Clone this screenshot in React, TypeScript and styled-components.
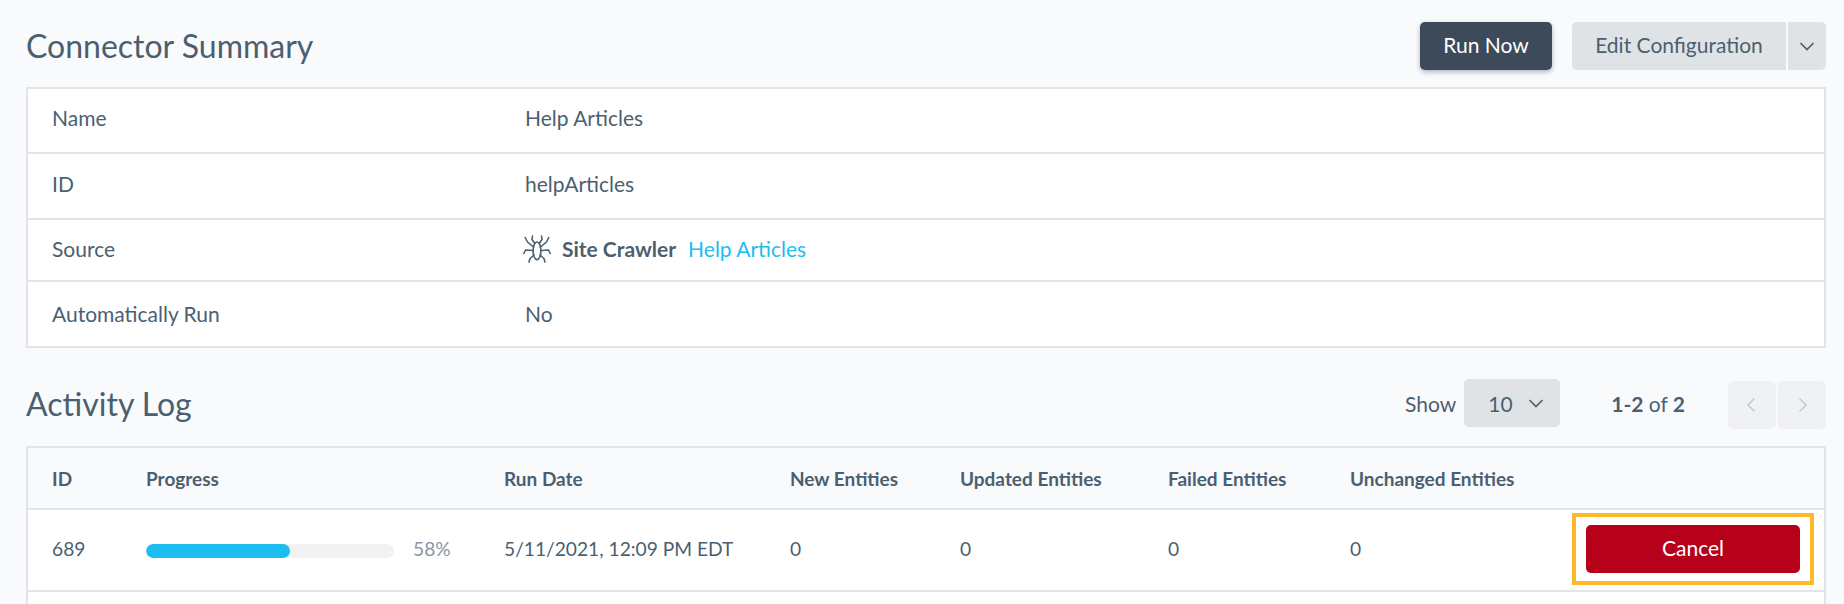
import React from "react";
import styled, { createGlobalStyle } from "styled-components";

const Global = createGlobalStyle`
  html, body { margin: 0; padding: 0; height: 100%; background: #f9fafc; overflow: hidden; }
  * { box-sizing: border-box; }
  body { font-family: Lato, "Open Sans", sans-serif; color: #4b5f70; font-size: 21px; }
`;

const Page = styled.div`
  padding: 22px 18px 0 26px;
  height: 604px;
  overflow: hidden;
`;

const SectionHeader = styled.div<{ $top?: number }>`
  display: flex;
  align-items: center;
  justify-content: space-between;
  height: 48px;
  margin-top: ${(p) => p.$top ?? 0}px;
  margin-bottom: 17px;
`;

const Title = styled.h2<{ $lift?: number }>`
  margin: -${(p) => p.$lift ?? 0}px 0 0;
  font-size: 32px;
  font-weight: 400;
  color: #4b5f70;
  line-height: 48px;
`;

const Actions = styled.div`
  display: flex;
  align-items: center;
`;

const Button = styled.button`
  font-family: inherit;
  font-size: 21px;
  height: 48px;
  border: 0;
  border-radius: 5px;
  padding: 0 0 3px;
  display: inline-flex;
  align-items: center;
  justify-content: center;
`;

const PrimaryButton = styled(Button)`
  width: 132px;
  margin-right: 20px;
  background: #3c4a59;
  color: #fff;
  box-shadow: 0 2px 5px rgba(60, 74, 89, 0.4);
`;

const SecondaryButton = styled(Button)`
  width: 214px;
  background: #e0e3e6;
  color: #4b5f70;
  border-radius: 5px 0 0 5px;
`;

const CaretButton = styled(Button)`
  width: 38px;
  margin-left: 2px;
  padding: 0;
  background: #e0e3e6;
  color: #4b5f70;
  border-radius: 0 5px 5px 0;
`;

const Table = styled.table`
  width: 1800px;
  table-layout: fixed;
  border-collapse: collapse;
  background: #fff;
  border: 2px solid #e1e4e8;
`;

const SummaryRow = styled.tr<{ $h: number }>`
  height: ${(p) => p.$h}px;
  border-bottom: 2px solid #e1e4e8;
`;

const Cell = styled.td<{ $lift: number }>`
  padding: 0 0 ${(p) => p.$lift}px 24px;
  white-space: nowrap;
`;

const ValueCell = styled(Cell)`
  padding-left: 0;
`;

const Source = styled.div`
  display: flex;
  align-items: center;
  margin-left: -2px;
`;

const SourceName = styled.strong`
  font-weight: 700;
  margin: 0 12px 0 11px;
`;

const Link = styled.a`
  color: #1cbdef;
  text-decoration: none;
`;

const LogControls = styled.div`
  display: flex;
  align-items: center;
`;

const ShowLabel = styled.span`
  margin: -4px 8px 0 0;
`;

const Select = styled.div`
  width: 96px;
  height: 48px;
  margin-top: -4px;
  background: #e0e3e6;
  border-radius: 5px;
  display: flex;
  align-items: center;
  justify-content: space-between;
  padding: 0 16px 0 24px;
`;

const Range = styled.span`
  margin: -4px 43px 0 51px;
  strong { font-weight: 700; }
`;

const Pager = styled.div`
  display: flex;
  gap: 2px;
`;

const PageButton = styled.div`
  width: 48px;
  height: 48px;
  background: #eff1f3;
  border-radius: 5px;
  display: flex;
  align-items: center;
  justify-content: center;
  color: #c6ccd2;
`;

const HeadRow = styled.tr`
  height: 62px;
  background: #f9fafc;
  border-bottom: 2px solid #e1e4e8;
`;

const HeadCell = styled.th<{ $w?: number; $pl?: number }>`
  ${(p) => (p.$w ? `width: ${p.$w}px;` : "")}
  padding: 0 0 0 ${(p) => p.$pl ?? 0}px;
  text-align: left;
  font-weight: 700;
  font-size: 19px;
  white-space: nowrap;
`;

const DataRow = styled.tr<{ $h: number }>`
  height: ${(p) => p.$h}px;
  border-bottom: 2px solid #e1e4e8;
`;

const DataCell = styled.td<{ $pl?: number }>`
  padding: 0 0 3px ${(p) => p.$pl ?? 0}px;
  font-size: 19.2px;
  white-space: nowrap;
`;

const Progress = styled.div`
  display: flex;
  align-items: center;
`;

const Track = styled.div`
  width: 248px;
  height: 14px;
  background: #f1f2f4;
  border-radius: 7px;
  overflow: hidden;
  margin-top: 5px;
`;

const Fill = styled.div`
  height: 100%;
  background: #1cbdef;
  border-radius: 7px;
`;

const Percent = styled.span`
  margin-left: 19px;
  color: #8a96a1;
`;

const Highlight = styled.div`
  width: 242px;
  height: 72px;
  margin: 1px 0 0 4px;
  border: 4px solid #fdb927;
  display: flex;
  align-items: center;
  justify-content: center;
`;

const CancelButton = styled(Button)`
  width: 214px;
  background: #b70019;
  color: #fff;
`;

const Chevron = ({ dir = "down" }: { dir?: "down" | "left" | "right" }) => {
  const d = dir === "down" ? "M1.5 5l6.5 6.5L14.5 5" : dir === "left" ? "M10.5 1.5L4 8l6.5 6.5" : "M5.5 1.5L12 8l-6.5 6.5";
  return (
    <svg width={16} height={16} viewBox="0 0 16 16" fill="none" stroke="currentColor" strokeWidth="1.7">
      <path d={d} />
    </svg>
  );
};

const Spider = () => (
  <svg width="28" height="28" viewBox="0 0 28 28" fill="none" stroke="#4b5f70" strokeWidth="1.6" strokeLinecap="round" strokeLinejoin="round">
    <ellipse cx="14" cy="15.8" rx="3.9" ry="8.8" />
    <path d="M11.5 8 L9 4.5 L9.5 1" />
    <path d="M16.5 8 L19 4.5 L18.5 1" />
    <path d="M10.5 12 L4.5 7 L2.2 2.5" />
    <path d="M17.5 12 L23.5 7 L25.8 2.5" />
    <path d="M10 15.5 L2.5 15 L0.8 18.5" />
    <path d="M18 15.5 L25.5 15 L27.2 18.5" />
    <path d="M11 20 L7 23.5 L6 27" />
    <path d="M17 20 L21 23.5 L22 27" />
  </svg>
);

const summary: { label: string; h: number; lift: number; value: React.ReactNode }[] = [
  { label: "Name", h: 65, lift: 6, value: "Help Articles" },
  { label: "ID", h: 66, lift: 5, value: "helpArticles" },
  {
    label: "Source",
    h: 62,
    lift: 3,
    value: (
      <Source>
        <Spider />
        <SourceName>Site Crawler</SourceName>
        <Link href="#">Help Articles</Link>
      </Source>
    ),
  },
  { label: "Automatically Run", h: 66, lift: 1, value: "No" },
];

export default function App() {
  return (
    <Page>
      <Global />
      <SectionHeader>
        <Title>Connector Summary</Title>
        <Actions>
          <PrimaryButton>Run Now</PrimaryButton>
          <SecondaryButton>Edit Configuration</SecondaryButton>
          <CaretButton>
            <Chevron />
          </CaretButton>
        </Actions>
      </SectionHeader>
      <Table>
        <colgroup>
          <col style={{ width: 498 }} />
          <col />
        </colgroup>
        <tbody>
          {summary.map((r) => (
            <SummaryRow key={r.label} $h={r.h}>
              <Cell $lift={r.lift}>{r.label}</Cell>
              <ValueCell $lift={r.lift}>{r.value}</ValueCell>
            </SummaryRow>
          ))}
        </tbody>
      </Table>
      <SectionHeader $top={33}>
        <Title $lift={3}>Activity Log</Title>
        <LogControls>
          <ShowLabel>Show</ShowLabel>
          <Select>
            10
            <Chevron />
          </Select>
          <Range>
            <strong>1-2</strong> of <strong>2</strong>
          </Range>
          <Pager>
            <PageButton>
              <Chevron dir="left" />
            </PageButton>
            <PageButton>
              <Chevron dir="right" />
            </PageButton>
          </Pager>
        </LogControls>
      </SectionHeader>
      <Table>
        <thead>
          <HeadRow>
            <HeadCell $w={119} $pl={24}>ID</HeadCell>
            <HeadCell $w={358}>Progress</HeadCell>
            <HeadCell $w={286}>Run Date</HeadCell>
            <HeadCell $w={170}>New Entities</HeadCell>
            <HeadCell $w={208}>Updated Entities</HeadCell>
            <HeadCell $w={182}>Failed Entities</HeadCell>
            <HeadCell $w={218}>Unchanged Entities</HeadCell>
            <HeadCell />
          </HeadRow>
        </thead>
        <tbody>
          <DataRow $h={82}>
            <DataCell $pl={24}>689</DataCell>
            <DataCell>
              <Progress>
                <Track>
                  <Fill style={{ width: "58%" }} />
                </Track>
                <Percent>58%</Percent>
              </Progress>
            </DataCell>
            <DataCell>5/11/2021, 12:09 PM EDT</DataCell>
            <DataCell>0</DataCell>
            <DataCell>0</DataCell>
            <DataCell>0</DataCell>
            <DataCell>0</DataCell>
            <DataCell>
              <Highlight>
                <CancelButton>Cancel</CancelButton>
              </Highlight>
            </DataCell>
          </DataRow>
          <DataRow $h={81}>
            <DataCell colSpan={8} />
          </DataRow>
        </tbody>
      </Table>
    </Page>
  );
}
